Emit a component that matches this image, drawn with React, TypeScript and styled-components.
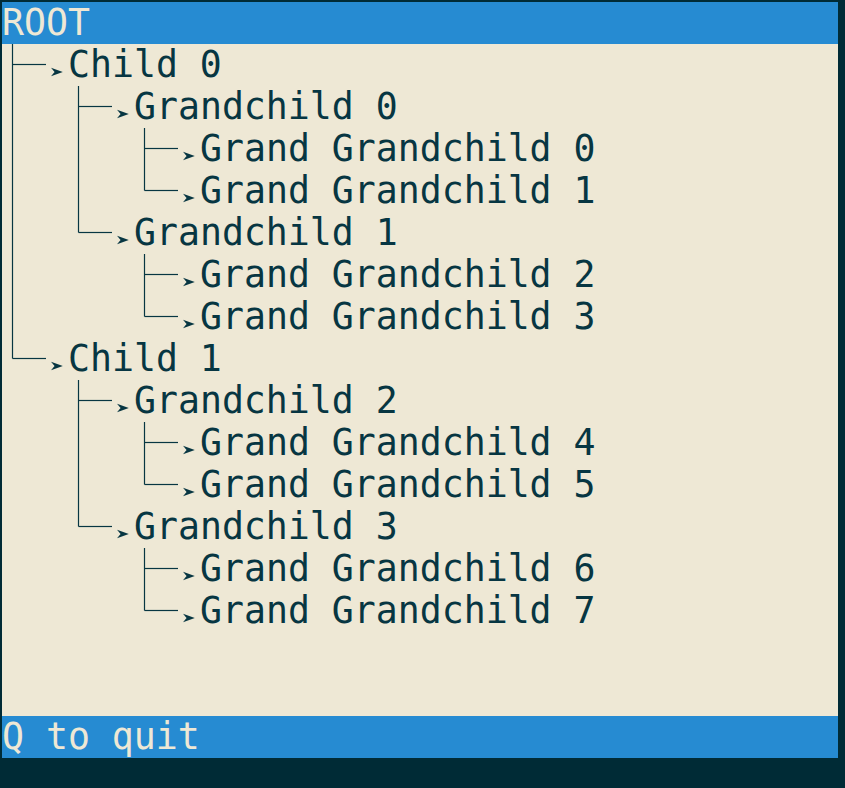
import React from 'react';
import styled, { createGlobalStyle } from 'styled-components';

const GlobalStyle = createGlobalStyle`
  html, body {
    margin: 0;
    padding: 0;
    background: #002b36;
  }
`;

const Screen = styled.div`
  width: 845px;
  height: 788px;
  padding: 2px 0 0 2px;
  box-sizing: border-box;
  background: #002b36;
`;

const Panel = styled.div`
  width: 836px;
  height: 756px;
  display: flex;
  flex-direction: column;
  background: #eee8d5;
  color: #073642;
  font-family: "DejaVu Sans Mono", "Liberation Mono", monospace;
  font-size: 36.5px;
  line-height: 42px;
`;

const Bar = styled.div`
  height: 42px;
  background: #268bd2;
  color: #eee8d5;
  white-space: pre;
`;

const Tree = styled.div`
  flex: 1;
  display: flex;
  flex-direction: column;
`;

const Row = styled.div`
  display: flex;
  height: 42px;
  white-space: pre;
`;

const Cell = styled.span`
  display: block;
  width: 22px;
  height: 42px;
  flex: none;
`;

const Label = styled.span`
  display: block;
`;

type Kind = 'blank' | 'pipe' | 'tee' | 'elbow' | 'dash' | 'arrow';

const Glyph: React.FC<{ kind: Kind }> = ({ kind }) => (
  <Cell>
    <svg width="22" height="42" viewBox="0 0 22 42">
      {(kind === 'pipe' || kind === 'tee') && (
        <line x1="10.5" y1="0" x2="10.5" y2="42" stroke="#073642" strokeWidth="1.2" />
      )}
      {kind === 'elbow' && (
        <line x1="10.5" y1="0" x2="10.5" y2="20.5" stroke="#073642" strokeWidth="1.2" />
      )}
      {(kind === 'tee' || kind === 'elbow') && (
        <line x1="10.5" y1="20.5" x2="22" y2="20.5" stroke="#073642" strokeWidth="1.2" />
      )}
      {kind === 'dash' && (
        <line x1="0" y1="20.5" x2="22" y2="20.5" stroke="#073642" strokeWidth="1.2" />
      )}
      {kind === 'arrow' && (
        <polygon points="5,23.8 16.8,28 5,32.2 8.6,28" fill="#073642" />
      )}
    </svg>
  </Cell>
);

type Node = { label: string; children?: Node[] };

const data: Node[] = [0, 1].map((c) => ({
  label: `Child ${c}`,
  children: [0, 1].map((g) => {
    const gi = c * 2 + g;
    return {
      label: `Grandchild ${gi}`,
      children: [0, 1].map((k) => ({ label: `Grand Grandchild ${gi * 2 + k}` })),
    };
  }),
}));

type Line = { prefix: Kind[]; label: string };

const flatten = (nodes: Node[], lead: Kind[]): Line[] =>
  nodes.flatMap((node, i) => {
    const last = i === nodes.length - 1;
    const line: Line = { prefix: [...lead, last ? 'elbow' : 'tee', 'dash', 'arrow'], label: node.label };
    const rest = node.children ? flatten(node.children, [...lead, last ? 'blank' : 'pipe', 'blank', 'blank']) : [];
    return [line, ...rest];
  });

const lines = flatten(data, []);

const App: React.FC = () => (
  <>
    <GlobalStyle />
    <Screen>
      <Panel>
        <Bar>ROOT</Bar>
        <Tree>
          {lines.map((line, i) => (
            <Row key={i}>
              {line.prefix.map((k, j) => (
                <Glyph key={j} kind={k} />
              ))}
              <Label>{line.label}</Label>
            </Row>
          ))}
        </Tree>
        <Bar>Q to quit</Bar>
      </Panel>
    </Screen>
  </>
);

export default App;
